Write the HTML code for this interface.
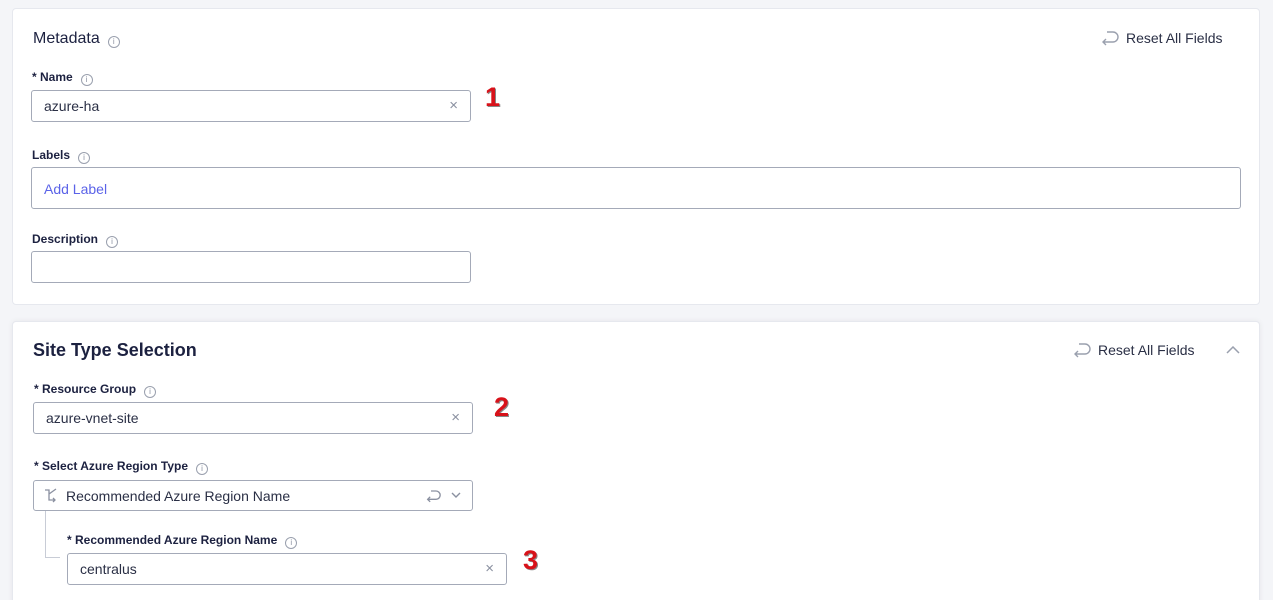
<!DOCTYPE html>
<html><head><style>
html,body{margin:0;width:1273px;height:600px;overflow:hidden}
body{background:#f4f5f8;font-family:"Liberation Sans",sans-serif;position:relative;color:#1c2140}
.card{position:absolute;left:12px;width:1246px;background:#fff;border:1px solid #e6e8ee;border-radius:4px}
.a{position:absolute}
.lbl{font-size:12px;font-weight:bold;color:#1c2140}
.inp{position:absolute;border:1px solid #a4aab8;border-radius:3px;background:#fff;box-sizing:border-box;font-size:14px;color:#2a2f45}
.inp span{position:absolute;left:12px;top:7px}
.x{position:absolute;right:12px;top:6px;color:#8a90a0;font-size:15px}
.i{display:inline-block;width:10px;height:10px;border:1px solid #9aa0ae;border-radius:50%;font-size:8px;line-height:10px;text-align:center;color:#8a90a0;margin-left:8px;vertical-align:-1px;font-weight:normal}
.num{position:absolute;color:#d8121a;font-weight:bold;font-size:27px;text-shadow:1px 1px 0 #888}
.reset{position:absolute;font-size:14px;color:#2a2f45}
svg.r{position:absolute}
</style></head><body>
<div class="card" style="top:8px;height:295px"></div>
<div class="card" style="top:321px;height:290px;box-shadow:0 0 6px rgba(0,0,0,.06)"></div>

<div class="a" style="left:33px;top:30px;font-size:16px">Metadata<span class="i">i</span></div>
<svg class="r" style="left:1101px;top:30px" width="18" height="16" viewBox="0 0 18 16"><path d="M6 2H12a5 5 0 0 1 0 10H2M5 9l-3 3 3 3" fill="none" stroke="#9aa0ae" stroke-width="1.4"/></svg>
<div class="reset" style="left:1126px;top:30px">Reset All Fields</div>

<div class="a lbl" style="left:32px;top:70px">* Name<span class="i">i</span></div>
<div class="inp" style="left:31px;top:90px;width:440px;height:32px"><span>azure-ha</span><div class="x">×</div></div>
<div class="num" style="left:485px;top:82px">1</div>

<div class="a lbl" style="left:32px;top:148px">Labels<span class="i">i</span></div>
<div class="inp" style="left:31px;top:167px;width:1210px;height:42px"><span style="top:13px;color:#5b63e8">Add Label</span></div>

<div class="a lbl" style="left:32px;top:232px">Description<span class="i">i</span></div>
<div class="inp" style="left:31px;top:251px;width:440px;height:32px"></div>

<div class="a" style="left:33px;top:340px;font-size:18px;font-weight:bold">Site Type Selection</div>
<svg class="r" style="left:1073px;top:342px" width="18" height="16" viewBox="0 0 18 16"><path d="M6 2H12a5 5 0 0 1 0 10H2M5 9l-3 3 3 3" fill="none" stroke="#9aa0ae" stroke-width="1.4"/></svg>
<div class="reset" style="left:1098px;top:342px">Reset All Fields</div>
<svg class="r" style="left:1226px;top:346px" width="14" height="8"><path d="M1 7l6-6 6 6" fill="none" stroke="#9aa0ae" stroke-width="1.5"/></svg>

<div class="a lbl" style="left:34px;top:382px">* Resource Group<span class="i">i</span></div>
<div class="inp" style="left:33px;top:402px;width:440px;height:32px"><span>azure-vnet-site</span><div class="x">×</div></div>
<div class="num" style="left:494px;top:392px">2</div>

<div class="a lbl" style="left:34px;top:459px">* Select Azure Region Type<span class="i">i</span></div>
<div class="inp" style="left:33px;top:480px;width:440px;height:31px"><span style="left:32px">Recommended Azure Region Name</span>
<svg style="position:absolute;left:10px;top:7px" width="16" height="16"><path d="M1 2h4v10h6M9 10l2 2-2 2M5 6l7-5" fill="none" stroke="#8a90a0" stroke-width="1.3"/></svg>
<svg style="position:absolute;left:392px;top:8px" width="15" height="14" viewBox="0 0 18 16"><path d="M6 2H12a5 5 0 0 1 0 10H2M5 9l-3 3 3 3" fill="none" stroke="#8a90a0" stroke-width="1.6"/></svg>
<svg style="position:absolute;left:417px;top:11px" width="10" height="7"><path d="M1 1l4 4 4-4" fill="none" stroke="#8a90a0" stroke-width="1.4"/></svg></div>
<div class="a" style="left:45px;top:511px;width:14px;height:46px;border-left:1px solid #c8ccd6;border-bottom:1px solid #c8ccd6"></div>

<div class="a lbl" style="left:67px;top:533px">* Recommended Azure Region Name<span class="i">i</span></div>
<div class="inp" style="left:67px;top:553px;width:440px;height:32px"><span>centralus</span><div class="x">×</div></div>
<div class="num" style="left:523px;top:545px">3</div>
</body></html>
